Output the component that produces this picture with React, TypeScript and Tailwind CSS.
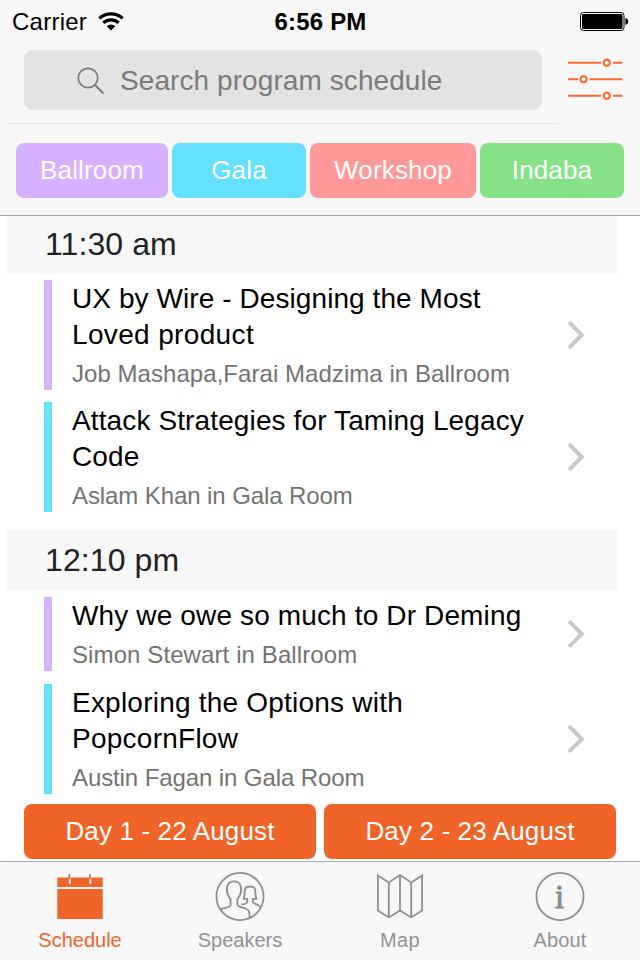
type Session = { lines: [string, string][]; speaker: string; sub: string; bar: string; box: string };
type Slot = { time: string; gap: string; head: string; sessions: Session[] };

const slots: Slot[] = [
  {
    time: '11:30 am',
    gap: '-mt-[2px]',
    head: 'mb-[6px] tracking-[0.1px]',
    sessions: [
      {
        lines: [['UX by Wire - Designing the Most', 'tracking-[0.08px]'], ['Loved product', 'tracking-[0.35px]']],
        speaker: 'Job Mashapa,Farai Madzima in Ballroom',
        sub: 'tracking-[0.05px]',
        bar: 'bg-[#d5b1ff]',
        box: 'h-[110px] mb-3',
      },
      {
        lines: [['Attack Strategies for Taming Legacy', 'tracking-[0.12px]'], ['Code', 'tracking-[0.12px]']],
        speaker: 'Aslam Khan in Gala Room',
        sub: 'tracking-[-0.09px]',
        bar: 'bg-[#65e0ff]',
        box: 'h-[110px]',
      },
    ],
  },
  {
    time: '12:10 pm',
    gap: 'mt-[18px]',
    head: 'mb-[7px] tracking-[0.1px]',
    sessions: [
      {
        lines: [['Why we owe so much to Dr Deming', 'tracking-[0.14px]']],
        speaker: 'Simon Stewart in Ballroom',
        sub: 'tracking-[0.1px]',
        bar: 'bg-[#d5b1ff]',
        box: 'h-[74px] mb-[13px]',
      },
      {
        lines: [['Exploring the Options with', 'tracking-[0.22px]'], ['PopcornFlow', 'tracking-[0.25px]']],
        speaker: 'Austin Fagan in Gala Room',
        sub: 'tracking-[-0.1px]',
        bar: 'bg-[#65e0ff]',
        box: 'h-[110px]',
      },
    ],
  },
];

const rooms = [
  { name: 'Ballroom', style: 'w-[152px] bg-[#d5b1ff]' },
  { name: 'Gala', style: 'w-[134px] bg-[#65e0ff]' },
  { name: 'Workshop', style: 'w-[166px] bg-[#ff9999]' },
  { name: 'Indaba', style: 'w-[144px] bg-[#86e286]' },
];

function StatusBar() {
  return (
    <div className="grid h-10 grid-cols-3 items-center pl-3 pr-[11px] text-2xl leading-10 text-black">
      <div className="flex items-center">
        <span className="pt-[2px] leading-10 tracking-[0.25px]">Carrier</span>
        <svg className="ml-[11px]" width="26" height="19" viewBox="0 0 26 19" fill="none" stroke="#000">
          <path d="M1.3 6.4C8 .4 18 .4 24.700 6.400" strokeWidth="3.200" />
          <path d="M5.300 10.800C9.800 6.800 16.200 6.800 20.700 10.800" strokeWidth="3.200" />
          <path d="M8.700 14.300Q13 10.800 17.300 14.300L13 18.400Z" fill="#000" stroke="none" />
        </svg>
      </div>
      <div className="pt-[2px] text-center font-bold tracking-[0.2px]">6:56 PM</div>
      <svg className="justify-self-end" width="50" height="20" viewBox="0 0 50 20">
        <rect x="1.500" y="1.500" width="43.500" height="18" rx="3" fill="none" stroke="#000" strokeWidth="1" />
        <rect x="3" y="3" width="40.500" height="15" rx="1.400" />
        <path d="M46.300 7.200Q49.200 7.600 49.200 10.500T46.300 13.800Z" />
      </svg>
    </div>
  );
}

function Chevron() {
  return (
    <svg className="mr-[54px] self-center" width="20" height="30" viewBox="0 0 20 30" fill="none" stroke="#c7c7cc" strokeWidth="4">
      <path d="M3 2.200 15.800 15 3 27.800" />
    </svg>
  );
}

function SessionRow({ s }: { s: Session }) {
  return (
    <div className={`flex pl-11 ${s.box}`}>
      <div className={`w-2 ${s.bar}`} />
      <div className="ml-5 flex-1 whitespace-nowrap">
        {s.lines.map(([text, spacing]) => (
          <div key={text} className={`h-9 text-[28px] leading-[38px] text-black ${spacing}`}>{text}</div>
        ))}
        <div className={`h-[38px] text-2xl leading-[43px] text-[#737373] ${s.sub}`}>{s.speaker}</div>
      </div>
      <Chevron />
    </div>
  );
}

const iconProps = { width: 50, height: 50, viewBox: '0 0 50 50', fill: 'none', stroke: '#8f8f8f', strokeWidth: 1.8 };

function TabBar() {
  return (
    <nav className="grid h-[99px] shrink-0 grid-cols-4 border-t border-[#a9adaa] bg-[#f7f7f7] text-xl text-[#929292]">
      <div className="flex flex-col items-center pt-[10px] text-[#f16529]">
        <svg width="50" height="50" viewBox="0 0 50 50" fill="#f16427">
          <path d="M2.300 5.500H47.700V15H2.300ZM2.300 17H47.700V47H2.300Z" />
          <path d="M14.800 4V11.800M35.300 4V11.800" stroke="#f7f7f7" strokeWidth="2" />
          <path d="M14.400 2V7M34.900 2V7" stroke="#f16427" strokeWidth="1.600" />
        </svg>
        <span className="mt-[2px] leading-8">Schedule</span>
      </div>
      <div className="flex flex-col items-center pt-[10px]">
        <svg {...iconProps}>
          <circle cx="25" cy="24.500" r="23.600" />
          <path d="M5.200 37.500C8 35.800 14.500 36.200 15.600 33V27.300C13.600 25.800 13.500 23 12.300 21C10.900 14 13 9.400 19 9.400C25 9.400 27 14 25.700 21C24.500 23 24.400 25.800 22.400 27.300V33C23.800 36 32 34.500 34 39.500C34.600 41.300 34.500 43.500 34.500 45.500" />
          <path d="M26.500 32.300C29 32.300 32 31.800 32.200 30V26.800H28.800C30.200 23 29.300 20 30 17.200C31 13.600 39 13.600 40 17.200C40.700 20 39.800 23 41.500 26.800H37.800V30C38.500 32.300 43 31.500 45.800 35.500" />
        </svg>
        <span className="mt-[2px] leading-8">Speakers</span>
      </div>
      <div className="flex flex-col items-center pt-[10px]">
        <svg {...iconProps}>
          <path d="M2.900 3.500 13.800 10.500 25 3 36.200 10.500 47.100 3.500V38.500L36.200 45.500 25 38.500 13.800 45.500 2.900 38.500ZM13.800 10.500V45.500M25 3V38.500M36.200 10.500V45.500" />
        </svg>
        <span className="mt-[2px] leading-8 tracking-[0.3px]">Map</span>
      </div>
      <div className="flex flex-col items-center pt-[10px]">
        <svg {...iconProps}>
          <circle cx="25" cy="24.500" r="23.600" />
          <text x="24.700" y="35.500" textAnchor="middle" fill="#8c8c8c" stroke="#8c8c8c" strokeWidth=".9" fontSize="33" className="font-['Liberation_Serif',serif]">i</text>
        </svg>
        <span className="mt-[2px] leading-8 tracking-[0.15px]">About</span>
      </div>
    </nav>
  );
}

export default function App() {
  return (
    <div className="flex h-[960px] w-[640px] flex-col overflow-hidden bg-white font-['Liberation_Sans',Arial,sans-serif]">
      <header className="h-[216px] shrink-0 border-b border-[#a9a9a9] bg-[#f7f7f7]">
        <StatusBar />
        <div className="flex items-center pl-6 pt-[10px]">
          <div className="flex h-[60px] w-[518px] items-center rounded-[9px] bg-[#e3e3e3] pl-[53px] text-[28px] text-[#7b7b7b]">
            <svg className="mt-[2px]" width="28" height="28" viewBox="0 0 28 28" fill="none" stroke="#7b7b7b" strokeWidth="1.700">
              <circle cx="11" cy="11" r="9.700" />
              <path d="M17.800 17.800 26.500 26.500" strokeWidth="2" />
            </svg>
            <span className="ml-[15px] pt-[2px] tracking-[0.08px]">Search program schedule</span>
          </div>
          <svg className="mb-[3px] ml-[26px]" width="55" height="44" viewBox="0 0 55 44" fill="none" stroke="#f9682f" strokeWidth="2.100">
            <path d="M0 5.700H33M45 5.700H54.500M0 22.200H10M21.500 22.200H54.500M0 38.700H33M45 38.700H54.500" />
            <circle cx="38.800" cy="5.700" r="3.100" />
            <circle cx="15.500" cy="22.200" r="3.100" />
            <circle cx="38.800" cy="38.700" r="3.100" />
          </svg>
        </div>
        <div className="ml-2 mt-[13px] h-px w-[550px] bg-[#e6e6e6]" />
        <div className="ml-4 mt-[19px] flex gap-1 text-[26px] leading-[55px] text-white">
          {rooms.map((r) => (
            <div key={r.name} className={`h-[55px] rounded-[8px] text-center tracking-[0.15px] ${r.style}`}>{r.name}</div>
          ))}
        </div>
      </header>

      <main className="h-[588px] shrink-0 overflow-hidden">
        {slots.map((slot) => (
          <section key={slot.time} className={slot.gap}>
            <h2 className={`ml-[6px] h-[60px] w-[612px] bg-[#f7f7f7] pl-[39px] text-[32px] leading-[60px] text-[#222] ${slot.head}`}>{slot.time}</h2>
            {slot.sessions.map((s) => <SessionRow key={s.speaker} s={s} />)}
          </section>
        ))}
      </main>

      <div className="flex h-[57px] shrink-0 gap-2 px-6 text-center text-[26px] leading-[55px] tracking-[0.15px] text-white">
        <div className="h-[55px] flex-1 rounded-[8px] bg-[#f16427]">Day 1 - 22 August</div>
        <div className="h-[55px] flex-1 rounded-[8px] bg-[#f16427]">Day 2 - 23 August</div>
      </div>
      <TabBar />
    </div>
  );
}
